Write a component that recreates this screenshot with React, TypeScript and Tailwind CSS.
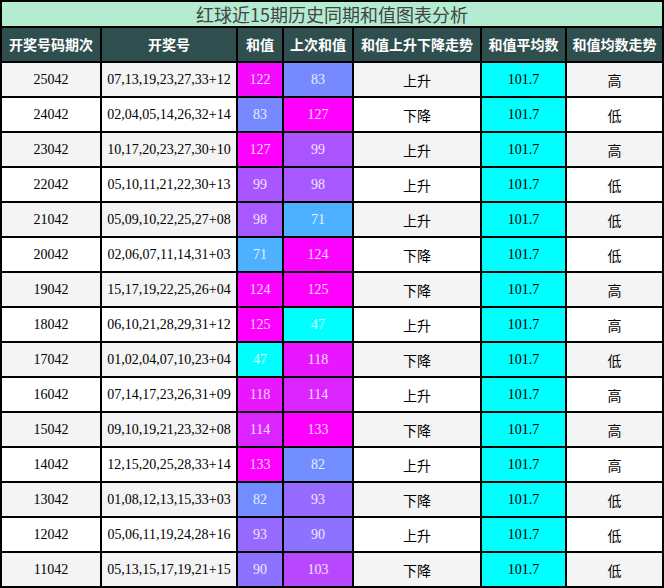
const rows: [string, string, number, number, string, string][] = [
  ["25042", "07,13,19,23,27,33+12", 122, 83, "上升", "高"],
  ["24042", "02,04,05,14,26,32+14", 83, 127, "下降", "低"],
  ["23042", "10,17,20,23,27,30+10", 127, 99, "上升", "高"],
  ["22042", "05,10,11,21,22,30+13", 99, 98, "上升", "低"],
  ["21042", "05,09,10,22,25,27+08", 98, 71, "上升", "低"],
  ["20042", "02,06,07,11,14,31+03", 71, 124, "下降", "低"],
  ["19042", "15,17,19,22,25,26+04", 124, 125, "下降", "高"],
  ["18042", "06,10,21,28,29,31+12", 125, 47, "上升", "高"],
  ["17042", "01,02,04,07,10,23+04", 47, 118, "下降", "低"],
  ["16042", "07,14,17,23,26,31+09", 118, 114, "上升", "高"],
  ["15042", "09,10,19,21,23,32+08", 114, 133, "下降", "高"],
  ["14042", "12,15,20,25,28,33+14", 133, 82, "上升", "高"],
  ["13042", "01,08,12,13,15,33+03", 82, 93, "下降", "低"],
  ["12042", "05,06,11,19,24,28+16", 93, 90, "上升", "低"],
  ["11042", "05,13,15,17,19,21+15", 90, 103, "下降", "低"],
];

function heat(v: number) {
  const t = Math.min(1, Math.max(0, (v - 47) / 78));
  return `rgb(${Math.round(255 * t)},${Math.round(255 * (1 - t))},255)`;
}

const cols = "grid grid-cols-[100px_136px_46px_70px_128px_85px_1fr]";
const font = { fontFamily: '"Liberation Serif", "Noto Sans CJK SC", serif' };

export default function App() {
  return (
    <div className="w-[664px] h-[588px] bg-white text-black border-l-2 border-black" style={font}>
      <div className="h-[28px] bg-[#b3ecd0] border-y-2 border-r-2 border-black flex items-center justify-center text-[18px] text-[#444]" style={{ fontFamily: '"Noto Sans CJK SC", sans-serif' }}>
        红球近15期历史同期和值图表分析
      </div>
      <div className={`${cols} h-[35px] bg-[#2f4f4f] text-white font-bold text-[14px]`} style={{ fontFamily: '"Noto Sans CJK SC", sans-serif' }}>
        {["开奖号码期次", "开奖号", "和值", "上次和值", "和值上升下降走势", "和值平均数", "和值均数走势"].map((h) => (
          <div key={h} className="flex items-center justify-center border-r-2 border-b-2 border-black">{h}</div>
        ))}
      </div>
      {rows.map((r, i) => (
        <div key={r[0]} className={`${cols} h-[35px] text-[14px] ${i % 2 === 0 ? "bg-[#f4f4f4]" : "bg-white"}`}>
          <div className="flex items-center justify-center border-r-2 border-b-2 border-black">{r[0]}</div>
          <div className="flex items-center justify-center border-r-2 border-b-2 border-black">{r[1]}</div>
          <div className="flex items-center justify-center border-r-2 border-b-2 border-black text-white/85" style={{ background: heat(r[2]) }}>{r[2]}</div>
          <div className="flex items-center justify-center border-r-2 border-b-2 border-black text-white/85" style={{ background: heat(r[3]) }}>{r[3]}</div>
          <div className="flex items-center justify-center border-r-2 border-b-2 border-black pt-1">{r[4]}</div>
          <div className="flex items-center justify-center border-r-2 border-b-2 border-black bg-[#00ffff]">101.7</div>
          <div className="flex items-center justify-center border-r-2 border-b-2 border-black pt-1">{r[5]}</div>
        </div>
      ))}
    </div>
  );
}
